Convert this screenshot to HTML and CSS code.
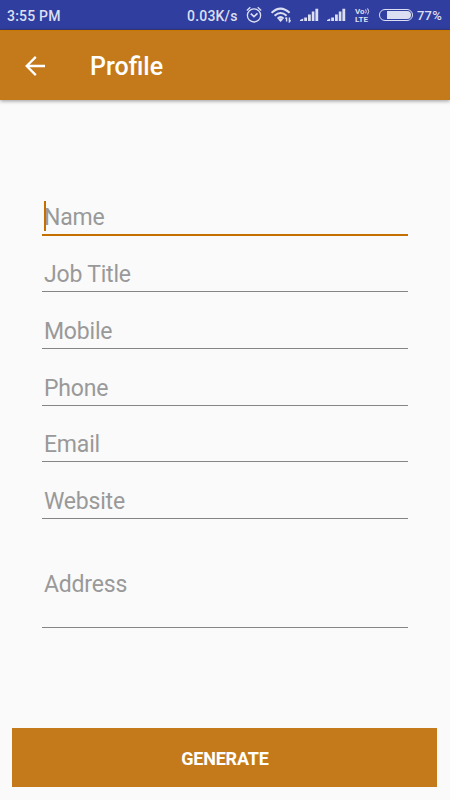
FILE: index.html
```html
<!DOCTYPE html>
<html lang="en">

<head>
    <meta charset="UTF-8">
    <meta name="viewport" content="width=device-width, initial-scale=1.0">
    <title>Profile</title>
    <link rel="stylesheet" href="styles.css">
</head>

<body>
    <div class="status-bar">
        <span class="time">3:55 PM</span>
        <span class="speed">0.03K/s</span>
        <svg class="alarm" width="16" height="18" viewBox="0 0 16 18" fill="none" stroke="currentColor">
            <circle cx="8" cy="9.4" r="6.6" stroke-width="1.3" />
            <path d="M4.8 7.6L8 10.6L11.5 7.4" stroke-width="1.6" />
            <path d="M.8 4.4L4.3 1.2M15.2 4.4L11.7 1.2" stroke-width="1.3" />
        </svg>
        <svg class="wifi" width="21" height="16" viewBox="0 0 21 16" fill="none" stroke="currentColor">
            <path d="M.6 5.8Q9.6 -2.6 18.6 5.8M3.6 8.8Q9.6 3.2 15.6 8.8M6.6 11.6Q9.6 8.6 12.6 11.6" stroke-width="2" />
            <path d="M7.2 12.4Q9.6 10.2 12 12.4L9.6 15Z" fill="currentColor" stroke="none" />
            <path d="M15.6 14.6V10.4M14.4 11.8L15.6 10.4M18.4 10.4V14.6L19.6 13.2" stroke-width="1.4" />
        </svg>
        <svg class="signal" width="19" height="14" viewBox="0 0 19 14" fill="currentColor">
            <path d="M0 13V12L3.2 10.6V13ZM4.2 13V9.4H7V13ZM8 13V6.6H10.8V13ZM11.8 13V3.6H14.4V13ZM15.4 13V.8H18.2V13Z" />
        </svg>
        <svg class="signal" width="19" height="14" viewBox="0 0 19 14" fill="currentColor">
            <path d="M0 13V12L3.2 10.6V13ZM4.2 13V9.4H7V13ZM8 13V6.6H10.8V13ZM11.8 13V3.6H14.4V13ZM15.4 13V.8H18.2V13Z" />
        </svg>
        <div class="volte">
            <div class="vo">Vo<svg width="5" height="7" viewBox="0 0 5 7" fill="none" stroke="currentColor">
                    <path d="M.6 1.4Q2 3.4 .6 5.4M2.6 .4Q4.8 3.4 2.6 6.4" />
                </svg></div>
            <div class="lte">LTE</div>
        </div>
        <div class="battery"><div class="level"></div></div>
        <span class="percent">77%</span>
    </div>

    <div class="toolbar">
        <svg class="back" width="20" height="20" viewBox="0 0 20 20" fill="none" stroke="currentColor" stroke-width="2.3">
            <path d="M20 10H1.8M10.8 .9L1.7 10L10.8 19.1" />
        </svg>
        <h1>Profile</h1>
    </div>

    <form class="form">
        <div class="field active"><span class="hint">Name</span><span class="cursor"></span></div>
        <div class="field"><span class="hint">Job Title</span></div>
        <div class="field"><span class="hint">Mobile</span></div>
        <div class="field"><span class="hint">Phone</span></div>
        <div class="field"><span class="hint">Email</span></div>
        <div class="field"><span class="hint">Website</span></div>
        <div class="field address"><span class="hint">Address</span></div>
        <button class="btn" type="button">GENERATE</button>
    </form>
</body>

</html>
```
FILE: styles.css
```css
* {
    box-sizing: border-box;
}

body {
    margin: 0;
    height: 800px;
    overflow: hidden;
    background-color: #fafafa;
    font-family: Roboto, sans-serif;
}

.status-bar {
    display: flex;
    align-items: center;
    height: 30px;
    padding: 0 8px 0 7px;
    border-bottom: 1px solid #3a3a80;
    background-color: #303f9f;
    color: #dcdff2;
    font-size: 14px;
    font-weight: 500;
    letter-spacing: 0.2px;
    line-height: 30px;
    white-space: nowrap;
}

.time,
.speed,
.percent {
    padding-top: 2px;
}

.speed {
    width: 51px;
    margin-left: auto;
}

.alarm {
    margin-left: 8px;
}

.wifi {
    margin-left: 9px;
}

.signal {
    margin-left: 8px;
}

.volte {
    width: 16px;
    margin-left: 9px;
    padding-top: 1px;
    font-size: 8px;
    font-weight: 700;
    letter-spacing: 0;
    line-height: 9px;
}

.vo {
    display: flex;
    align-items: center;
    height: 7px;
}

.lte {
    height: 7px;
    line-height: 9px;
}

.battery {
    width: 34px;
    height: 12px;
    margin-left: 8px;
    padding: 1px;
    border: 1px solid #dcdff2;
    border-radius: 6px;
}

.level {
    width: 24px;
    height: 8px;
    margin-left: auto;
    background-color: #dcdff2;
    border-radius: 0 4px 4px 0;
}

.percent {
    width: 25px;
    margin-left: 4px;
    font-size: 13px;
}

.toolbar {
    display: flex;
    align-items: center;
    height: 70px;
    padding-left: 25px;
    background-color: #c47a1a;
    border-top: 1px solid #c87800;
    box-shadow: 0 1px 4px rgba(0, 0, 0, 0.4);
    color: #fff;
}

.toolbar h1 {
    margin: 1px 0 0 45px;
    font-size: 25px;
    font-weight: 500;
}

.form {
    padding: 80px 12.4px 0;
}

.field {
    position: relative;
    display: flex;
    align-items: flex-end;
    height: 56.75px;
    margin: 0 30px;
    padding: 0 1.6px 3px;
    border-bottom: 1px solid #858585;
    color: #999;
    font-size: 23px;
    letter-spacing: -0.2px;
    line-height: 26px;
}

.active {
    height: 56px;
    margin-bottom: -0.6px;
    border-bottom: 2px solid #c47000;
    padding-bottom: 3px;
}

.address {
    height: 109px;
    padding-bottom: 29px;
}

/* text caret of the focused field */
.cursor {
    position: absolute;
    left: 1.6px;
    bottom: 3px;
    width: 2px;
    height: 30px;
    background-color: #c47000;
}

.btn {
    display: block;
    width: 425px;
    height: 59px;
    margin: 99.6px 0 0 0;
    padding: 2px 0 0;
    border: none;
    background-color: #c47a1a;
    color: #fff;
    font-family: inherit;
    font-size: 18px;
    font-weight: 700;
    letter-spacing: -0.2px;
}
```
